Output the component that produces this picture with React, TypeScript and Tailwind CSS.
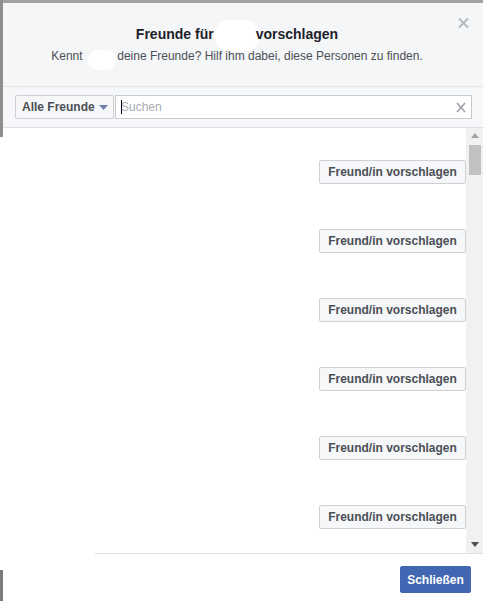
import React from "react";

const font = "font-['Liberation_Sans',Arial,Helvetica,sans-serif]";

function SuggestButton() {
  return (
    <button className="w-[147px] h-[24px] shrink-0 rounded-[2px] border border-[#ced0d4] bg-[#f6f7f9] text-[12px] font-bold leading-[22px] text-[#4b4f56]">
      Freund/in vorschlagen
    </button>
  );
}

export default function App() {
  return (
    <div className={`w-[483px] h-[601px] overflow-hidden bg-white flex ${font}`}>
      {/* left edge strip */}
      <div className="w-[3px] shrink-0 flex flex-col">
        <div className="h-[137px] bg-[#8e8e8e]" />
        <div className="flex-1 bg-white" />
        <div className="h-[31px] bg-[#7a7a7a]" />
      </div>

      <div className="flex-1 flex flex-col min-w-0">
        <div className="h-[3px] bg-[#a2a2a2]" />

        {/* header */}
        <div className="relative h-[84px] shrink-0 bg-[#f5f6f7] border-b border-[#e5e5e5] pr-[12px] pt-[22px] text-center">
          <div className="text-[14px] leading-[18px] font-bold text-[#1d2129]">
            Freunde für
            <span className="inline-block align-middle w-[46px] h-[31px] my-[-7px] mr-[-4px] rounded-full bg-white" />
            vorschlagen
          </div>
          <div className="mt-[4px] text-[12px] leading-[16px] text-[#4b4f56]">
            Kennt{" "}
            <span className="relative top-[3px] left-[2px] inline-block align-middle w-[28px] h-[20px] my-[-3px] rounded-full bg-white" />{" "}
            deine Freunde? Hilf ihm dabei, diese Personen zu finden.
          </div>
          <svg
            className="absolute right-[14px] top-[15px]"
            width="11"
            height="10"
            viewBox="0 0 11 10"
          >
            <path d="M1 0.5 L10 9.5 M10 0.5 L1 9.5" stroke="#b5b8bd" strokeWidth="2" />
          </svg>
        </div>

        {/* toolbar */}
        <div className="h-[41px] shrink-0 bg-[#f6f7f9] border-b border-[#dddfe2] pl-[12px] pr-[11px] flex items-center gap-[1px]">
          <button className="w-[99px] h-[24px] shrink-0 rounded-[2px] border border-[#ced0d4] bg-[#f6f7f9] flex items-center pl-[6px] gap-[4px] text-[12px] font-bold text-[#4b4f56]">
            <span>Alle Freunde</span>
            <svg width="9" height="5" viewBox="0 0 9 5">
              <path d="M0 0 L9 0 L4.5 5 Z" fill="#6f80ab" />
            </svg>
          </button>
          <div className="relative flex-1 h-[24px] border border-[#c6cad1] bg-white flex items-center pl-[5px]">
            <span className="w-[1px] h-[14px] bg-black" />
            <span className="text-[12px] text-[#a7abb1] ml-[-1px]">Suchen</span>
            <svg
              className="absolute right-[5px] top-[6px]"
              width="10"
              height="11"
              viewBox="0 0 10 11"
            >
              <path d="M1 1 L9 10 M9 1 L1 10" stroke="#a3a7ad" strokeWidth="1.8" />
            </svg>
          </div>
        </div>

        {/* list */}
        <div className="h-[425px] shrink-0 flex">
          <div className="flex-1 flex flex-col items-end pt-[32px] gap-[45px] overflow-hidden">
            <SuggestButton />
            <SuggestButton />
            <SuggestButton />
            <SuggestButton />
            <SuggestButton />
            <SuggestButton />
          </div>
          <div className="w-[17px] shrink-0 bg-[#f1f1f1] flex flex-col items-center">
            <svg className="mt-[5px]" width="8" height="5" viewBox="0 0 8 5">
              <path d="M0 5 L8 5 L4 0 Z" fill="#a3a3a3" />
            </svg>
            <div className="mt-[7px] w-[12px] h-[30px] bg-[#c1c1c1]" />
            <div className="flex-1" />
            <svg className="mb-[6px]" width="8" height="5" viewBox="0 0 8 5">
              <path d="M0 0 L8 0 L4 5 Z" fill="#505050" />
            </svg>
          </div>
        </div>
        <div className="h-[1px] ml-[92px] bg-[#dddfe2]" />

        {/* footer */}
        <div className="flex justify-end pt-[12px] pr-[12px]">
          <button className="w-[71px] h-[27px] rounded-[2px] border border-[#4267b2] bg-[#4267b2] text-[12px] font-bold text-white">
            Schließen
          </button>
        </div>
      </div>
    </div>
  );
}
